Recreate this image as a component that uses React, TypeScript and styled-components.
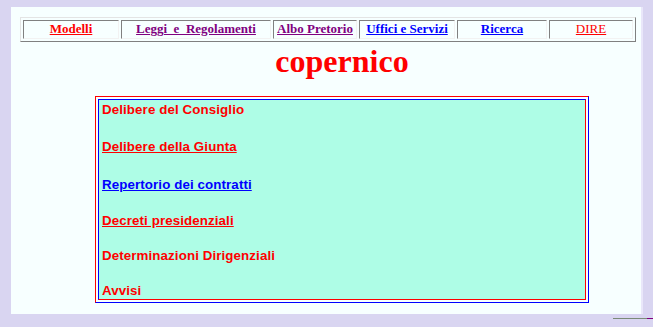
import React from 'react';
import styled, {createGlobalStyle} from 'styled-components';

const GlobalStyle = createGlobalStyle`
    html, body {
        margin: 0;
        padding: 0;
        background: #d9d5f1;
    }
`;

type LinkTone = 'red' | 'visited' | 'blue';

const toneColor: Record<LinkTone, string> = {
    red: '#ff0000',
    visited: '#800080',
    blue: '#0000ff',
};

interface NavItem {
    label: string;
    width: number;
    tone: LinkTone;
    bold?: boolean;
}

const navItems: NavItem[] = [
    {label: 'Modelli', width: 96, tone: 'red', bold: true},
    {label: 'Leggi_e_Regolamenti', width: 150, tone: 'visited', bold: true},
    {label: 'Albo Pretorio', width: 84, tone: 'visited', bold: true},
    {label: 'Uffici e Servizi', width: 96, tone: 'blue', bold: true},
    {label: 'Ricerca', width: 90, tone: 'blue', bold: true},
    {label: 'DIRE', width: 84, tone: 'red'},
];

interface Section {
    label: string;
    tone: LinkTone;
    underline: boolean;
    space: number;
}

const sections: Section[] = [
    {label: 'Delibere del Consiglio', tone: 'red', underline: false, space: 2},
    {label: 'Delibere della Giunta', tone: 'red', underline: true, space: 21},
    {label: 'Repertorio dei contratti', tone: 'blue', underline: true, space: 22},
    {label: 'Decreti presidenziali', tone: 'red', underline: true, space: 19.5},
    {label: 'Determinazioni Dirigenziali', tone: 'red', underline: false, space: 19.5},
    {label: 'Avvisi', tone: 'red', underline: false, space: 19},
];

const Page = styled.div`
    padding: 7px 0 0 11px;
`;

const Sheet = styled.div`
    box-sizing: border-box;
    width: 632px;
    height: 307px;
    padding: 10px 7px 0 9px;
    background: #f7ffff;
    border-right: 2px solid #e9e7fa;
`;

const NavTable = styled.div`
    display: flex;
    gap: 2px;
    width: fit-content;
    padding: 2px;
    border: 1px solid;
    border-color: #e4e4e4 #808080 #808080 #e4e4e4;
`;

const NavCell = styled.div<{$width: number}>`
    box-sizing: border-box;
    width: ${({$width}) => $width}px;
    height: 19px;
    padding-bottom: 1px;
    border: 1px solid;
    border-color: #808080 #f2f2f2 #f2f2f2 #808080;
    text-align: center;
    font-family: "Liberation Serif", "Times New Roman", serif;
    font-size: 13px;
    line-height: 16px;
`;

const NavLink = styled.a<{$tone: LinkTone; $bold?: boolean}>`
    color: ${({$tone}) => toneColor[$tone]};
    font-weight: ${({$bold}) => ($bold ? 700 : 400)};
    text-decoration: underline;
    white-space: nowrap;
`;

const Main = styled.div`
    display: flex;
    flex-direction: column;
    align-items: center;
    padding-left: 30px;
`;

const Title = styled.h1`
    margin: 1px 0 17px;
    color: #ff0000;
    font-family: "Liberation Serif", "Times New Roman", serif;
    font-size: 32px;
    font-weight: 700;
    line-height: 36px;
`;

const Frame = styled.div`
    box-sizing: border-box;
    width: 494px;
    padding: 2px;
    border: 1px solid;
    border-color: #ff0000 #0000ff #0000ff #ff0000;
`;

const FrameCell = styled.div`
    height: 199px;
    padding-left: 3px;
    border: 1px solid;
    border-color: #0000ff #ff0000 #ff0000 #0000ff;
    background: #aefde6;
`;

const Entry = styled.div<{$space: number; $tone: LinkTone; $underline: boolean}>`
    margin-top: ${({$space}) => $space}px;
    color: ${({$tone}) => toneColor[$tone]};
    text-decoration: ${({$underline}) => ($underline ? 'underline' : 'none')};
    font-family: "Liberation Sans", Arial, sans-serif;
    font-size: 13.33px;
    font-weight: 700;
    line-height: 16px;
    letter-spacing: 0.1px;
    width: fit-content;
`;

const Footer = styled.div`
    display: flex;
    justify-content: flex-end;
    padding-top: 4px;
`;

const FooterRule = styled.div`
    width: 40px;
    height: 1px;
    background: linear-gradient(to right, #7a8a78 85%, #800080 85%);
`;

export default function App() {
    return (
        <>
            <GlobalStyle/>
            <Page>
                <Sheet>
                    <NavTable>
                        {navItems.map((item) => (
                            <NavCell key={item.label} $width={item.width}>
                                <NavLink href='#' $tone={item.tone} $bold={item.bold}>
                                    {item.label}
                                </NavLink>
                            </NavCell>
                        ))}
                    </NavTable>
                    <Main>
                        <Title>copernico</Title>
                        <Frame>
                            <FrameCell>
                                {sections.map((section) => (
                                    <Entry
                                        key={section.label}
                                        $space={section.space}
                                        $tone={section.tone}
                                        $underline={section.underline}
                                    >
                                        {section.label}
                                    </Entry>
                                ))}
                            </FrameCell>
                        </Frame>
                    </Main>
                </Sheet>
                <Footer>
                    <FooterRule/>
                </Footer>
            </Page>
        </>
    );
}
